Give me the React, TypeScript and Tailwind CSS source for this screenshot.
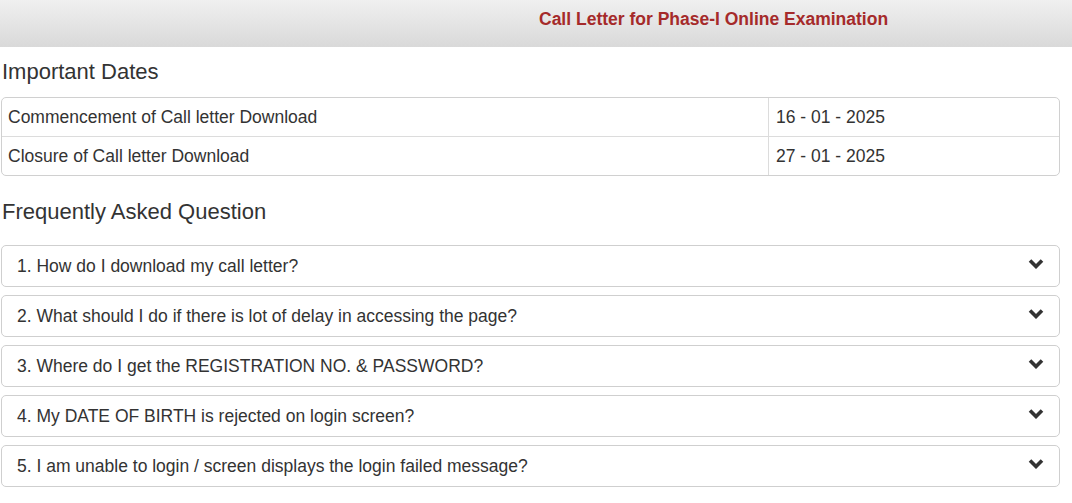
const dates = [
  { label: "Commencement of Call letter Download", value: "16 - 01 - 2025" },
  { label: "Closure of Call letter Download", value: "27 - 01 - 2025" },
];

const faqs = [
  "1. How do I download my call letter?",
  "2. What should I do if there is lot of delay in accessing the page?",
  "3. Where do I get the REGISTRATION NO. & PASSWORD?",
  "4. My DATE OF BIRTH is rejected on login screen?",
  "5. I am unable to login / screen displays the login failed message?",
];

function Chevron() {
  return (
    <svg width="16" height="11" viewBox="0 0 16 11" className="shrink-0 -mt-[6px]">
      <path d="M2 2.5 L8 8.5 L14 2.5" fill="none" stroke="#333" strokeWidth="3.6" strokeLinecap="butt" strokeLinejoin="miter" />
    </svg>
  );
}

export default function App() {
  return (
    <div className="min-h-screen bg-white font-['Liberation_Sans',Arial,sans-serif] text-[#333]">
      {/* Header */}
      <header className="h-[47px] bg-gradient-to-b from-[#f0f0f0] to-[#d9d9d9] pl-[539px] pt-[9px]">
        <h1 className="text-[17.5px] leading-[21px] font-bold text-[#a52a2a]">
          Call Letter for Phase-I Online Examination
        </h1>
      </header>

      <main className="pl-[1px] pr-[12px]">
        {/* Important dates */}
        <h2 className="mt-[13px] pl-[1px] text-[22px] leading-[24px]">Important Dates</h2>
        <div className="mt-[13px] rounded-[5px] border border-[#d0d0d0] text-[17.5px]">
          {dates.map((d, i) => (
            <div
              key={d.label}
              className={`grid grid-cols-[766px_1fr] ${i > 0 ? "border-t border-[#dcdcdc]" : ""}`}
            >
              <div className="flex h-[38px] items-center pl-[6px]">{d.label}</div>
              <div className="flex h-[38px] items-center border-l border-[#dcdcdc] pl-[7px]">{d.value}</div>
            </div>
          ))}
        </div>

        {/* FAQ */}
        <h2 className="mt-[24px] pl-[1px] text-[22px] leading-[24px]">Frequently Asked Question</h2>
        <div className="mt-[21px] flex flex-col gap-[8px]">
          {faqs.map((q) => (
            <div
              key={q}
              className="flex h-[42px] items-center justify-between rounded-[5px] border border-[#cfcfcf] pl-[15px] pr-[15px] text-[17.5px]"
            >
              <span>{q}</span>
              <Chevron />
            </div>
          ))}
        </div>
      </main>
    </div>
  );
}
